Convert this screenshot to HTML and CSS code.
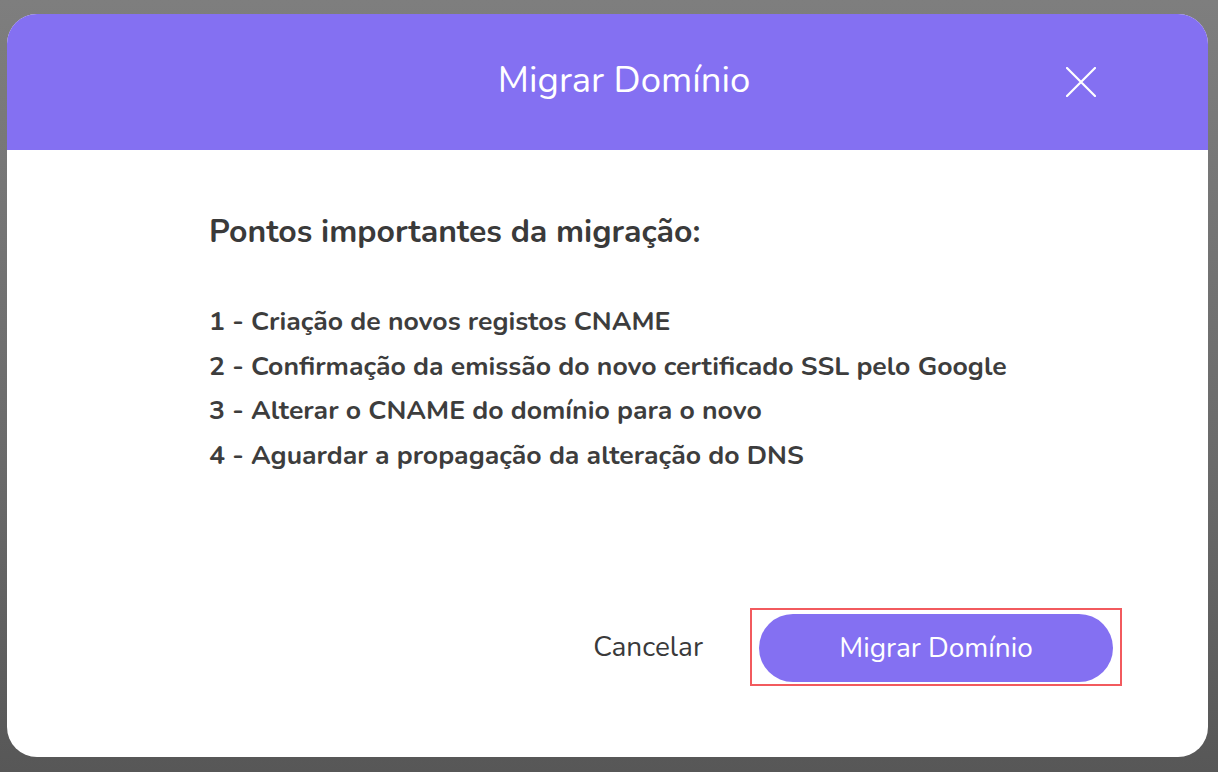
FILE: index.html
```html
<!DOCTYPE html>
<html lang="pt">
<head>
<meta charset="utf-8">
<title>Migrar Domínio</title>
<link rel="stylesheet" href="styles.css">
</head>
<body>
<div class="modal">
  <div class="modal-header">
    <h1 class="modal-title">Migrar Domínio</h1>
    <button class="close-btn" aria-label="Fechar">
      <svg width="30" height="30" viewBox="0 0 30 30"><path d="M1 1 L29 29 M29 1 L1 29" stroke="#fff" stroke-width="2.2" stroke-linecap="round" fill="none"/></svg>
    </button>
  </div>
  <div class="modal-body">
    <h2 class="section-title">Pontos importantes da migração:</h2>
    <ul class="steps">
      <li>1 - Criação de novos registos CNAME</li>
      <li>2 - Confirmação da emissão do novo certificado SSL pelo Google</li>
      <li>3 - Alterar o CNAME do domínio para o novo</li>
      <li>4 - Aguardar a propagação da alteração do DNS</li>
    </ul>
  </div>
  <div class="modal-footer">
    <button class="btn-cancel">Cancelar</button>
    <div class="highlight">
      <button class="btn-primary">Migrar Domínio</button>
    </div>
  </div>
</div>
</body>
</html>
```

FILE: styles.css
```css
html, body {
  margin: 0;
  padding: 0;
}
body {
  width: 1218px;
  height: 772px;
  background: linear-gradient(180deg, #7e7e7e 0%, #6a6a6a 60%, #575757 100%);
  font-family: "Nunito", "Open Sans", "Noto Sans", sans-serif;
  overflow: hidden;
  padding: 14px 0 0 7px;
  box-sizing: border-box;
}
.modal {
  width: 1201px;
  height: 743px;
  background: #fff;
  border-radius: 30px;
  overflow: hidden;
  display: flex;
  flex-direction: column;
}
.modal-header {
  height: 136px;
  flex: none;
  background: #8470f2;
  display: flex;
  align-items: center;
  padding: 0 112px 0 175px;
  box-sizing: border-box;
}
.modal-title {
  flex: 1;
  margin: 0;
  text-align: center;
  color: #fff;
  font-weight: 400;
  font-size: 36.5px;
  margin-top: -4px;
}
.close-btn {
  width: 30px;
  height: 30px;
  padding: 0;
  border: 0;
  background: none;
  display: flex;
}
.modal-body {
  flex: 1;
  padding: 60px 100px 0 202px;
}
.section-title {
  margin: 0;
  font-size: 32px;
  font-weight: 700;
  color: #3a3a3a;
}
.steps {
  list-style: none;
  margin: 46px 0 0;
  padding: 0;
}
.steps li {
  font-size: 26.6px;
  font-weight: 700;
  color: #3d3d3d;
  line-height: 44.7px;
  white-space: nowrap;
}
.modal-footer {
  display: flex;
  justify-content: flex-end;
  align-items: center;
  gap: 47px;
  padding: 0 86px 71px 0;
}
.btn-cancel {
  border: 0;
  background: none;
  padding: 0;
  font-family: inherit;
  font-size: 28px;
  color: #3a3a3a;
}
.highlight {
  border: 2px solid #f25a5e;
  padding: 4px 7px 2px 7px;
}
.btn-primary {
  display: block;
  width: 354px;
  height: 68px;
  border: 0;
  border-radius: 34px;
  background: #8470f2;
  color: #fff;
  font-family: inherit;
  font-size: 28px;
}
```
